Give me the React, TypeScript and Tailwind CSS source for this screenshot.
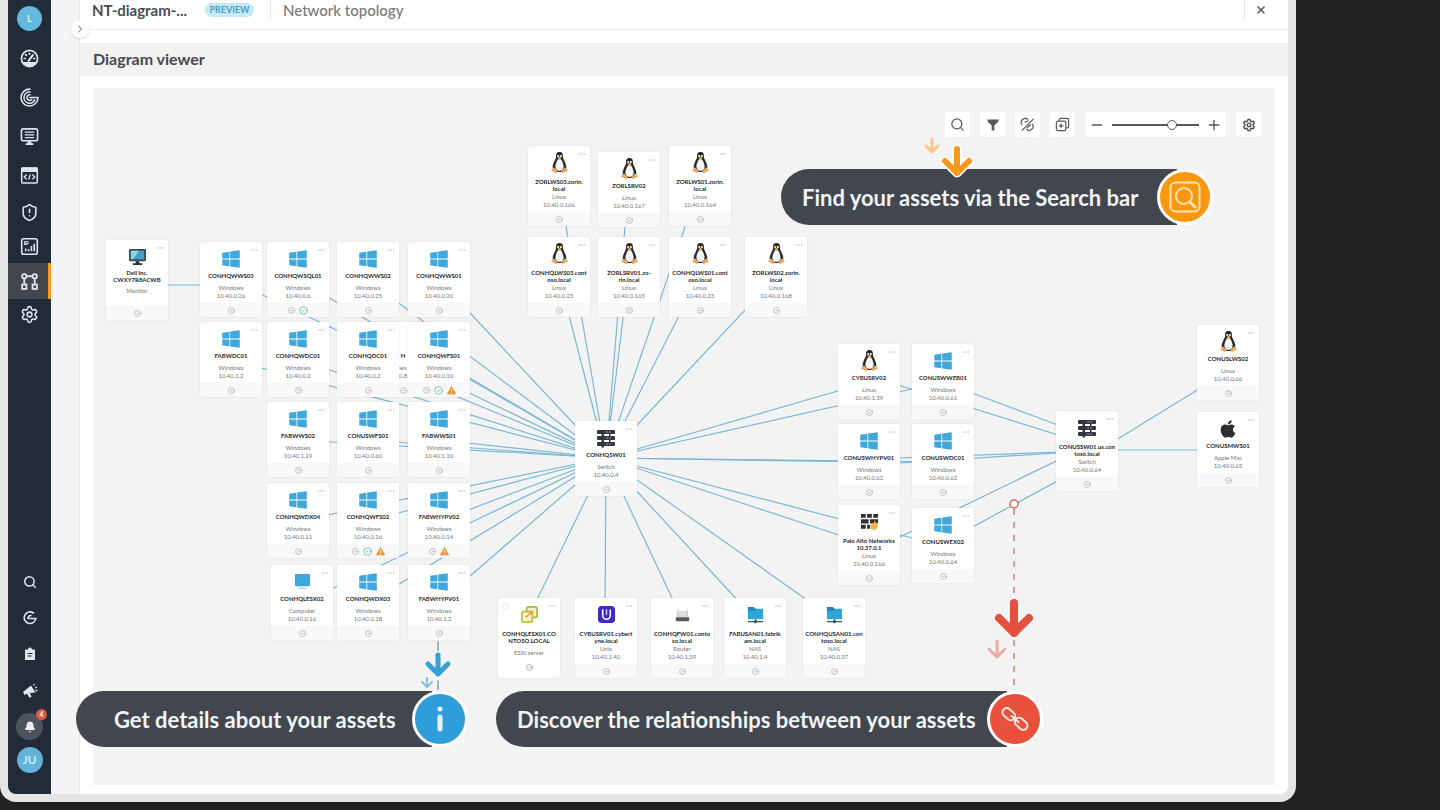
import type { ReactNode } from "react";
import {
  Bell,
  ChevronRight,
  Circle,
  CircleCheck,
  CircleDot,
  Ellipsis,
  Minus,
  Plus,
  Search,
  Settings,
  ShieldAlert,
  X,
} from "lucide-react";
import { FaApple, FaWindows } from "react-icons/fa";

type Kind =
  | "windows"
  | "linux"
  | "apple"
  | "switch"
  | "monitor"
  | "computer"
  | "esx"
  | "unix"
  | "router"
  | "nas"
  | "firewall"
  | "unknown";

type Asset = {
  x: number;
  y: number;
  kind: Kind;
  name: string[];
  type: string;
  ip?: string;
  ok?: boolean;
  warn?: boolean;
};

const ASSETS: Asset[] = [
  { x: 13, y: 152, kind: "monitor", name: ["Dell Inc.", "CWXY7R8ACWB"], type: "Monitor" },

  // partly hidden under its neighbours
  { x: 279, y: 234, kind: "unknown", name: ["H"], type: "ws", ip: "0.8" },

  { x: 107, y: 154, kind: "windows", name: ["CONHQWWS03"], type: "Windows", ip: "10.40.0.26" },
  { x: 174, y: 154, kind: "windows", name: ["CONHQWSQL01"], type: "Windows", ip: "10.40.0.6", ok: true },
  { x: 244, y: 154, kind: "windows", name: ["CONHQWWS02"], type: "Windows", ip: "10.40.0.25" },
  { x: 315, y: 154, kind: "windows", name: ["CONHQWWS01"], type: "Windows", ip: "10.40.0.20" },

  { x: 107, y: 234, kind: "windows", name: ["FABWDC01"], type: "Windows", ip: "10.40.1.2" },
  { x: 174, y: 234, kind: "windows", name: ["CONHQWDC01"], type: "Windows", ip: "10.40.0.2" },
  { x: 244, y: 234, kind: "windows", name: ["CONHQDC01"], type: "Windows", ip: "10.40.0.2" },
  { x: 315, y: 234, kind: "windows", name: ["CONHQWFS01"], type: "Windows", ip: "10.40.0.10", ok: true, warn: true },

  { x: 174, y: 314, kind: "windows", name: ["FABWWS02"], type: "Windows", ip: "10.40.1.19" },
  { x: 244, y: 314, kind: "windows", name: ["CONUSWFS01"], type: "Windows", ip: "10.40.0.60" },
  { x: 315, y: 314, kind: "windows", name: ["FABWWS01"], type: "Windows", ip: "10.40.1.10" },

  { x: 174, y: 395, kind: "windows", name: ["CONHQWDX04"], type: "Windows", ip: "10.40.0.11" },
  { x: 244, y: 395, kind: "windows", name: ["CONHQWFS02"], type: "Windows", ip: "10.40.0.16", ok: true, warn: true },
  { x: 315, y: 395, kind: "windows", name: ["FABWHYPV02"], type: "Windows", ip: "10.40.0.14", warn: true },

  { x: 178, y: 477, kind: "computer", name: ["CONHQLESX02"], type: "Computer", ip: "10.40.0.16" },
  { x: 244, y: 477, kind: "windows", name: ["CONHQWDX03"], type: "Windows", ip: "10.40.0.18" },
  { x: 315, y: 477, kind: "windows", name: ["FABWHYPV01"], type: "Windows", ip: "10.40.1.2" },

  { x: 435, y: 58, kind: "linux", name: ["ZORLWS03.zorin.", "local"], type: "Linux", ip: "10.40.0.166" },
  { x: 505, y: 64, kind: "linux", name: ["ZORLSRV02"], type: "Linux", ip: "10.40.0.167" },
  { x: 576, y: 58, kind: "linux", name: ["ZORLWS01.zorin.", "local"], type: "Linux", ip: "10.40.0.164" },
  { x: 435, y: 149, kind: "linux", name: ["CONHQLWS03.cont", "oso.local"], type: "Linux", ip: "10.40.0.23" },
  { x: 505, y: 149, kind: "linux", name: ["ZORLSRV01.zo-", "rin.local"], type: "Linux", ip: "10.40.0.165" },
  { x: 576, y: 149, kind: "linux", name: ["CONHQLWS01.cont", "oso.local"], type: "Linux", ip: "10.40.0.23" },
  { x: 652, y: 149, kind: "linux", name: ["ZORLWS02.zorin.", "local"], type: "Linux", ip: "10.40.0.168" },

  { x: 482, y: 333, kind: "switch", name: ["CONHQSW01"], type: "Switch", ip: "10.40.0.4" },

  { x: 405, y: 510, kind: "esx", name: ["CONHQLESX01.CO", "NTOSO.LOCAL"], type: "ESXi server" },
  { x: 482, y: 510, kind: "unix", name: ["CYBUSRV01.cybert", "yne.local"], type: "Unix", ip: "10.40.1.40" },
  { x: 558, y: 510, kind: "router", name: ["CONHQFW01.conto", "so.local"], type: "Router", ip: "10.40.1.39" },
  { x: 631, y: 510, kind: "nas", name: ["FABUSAN01.fabrik", "am.local"], type: "NAS", ip: "10.40.1.4" },
  { x: 710, y: 510, kind: "nas", name: ["CONHQUSAN01.con", "toso.local"], type: "NAS", ip: "10.40.0.37" },

  { x: 745, y: 256, kind: "linux", name: ["CYBUSRV02"], type: "Linux", ip: "10.40.1.39" },
  { x: 819, y: 256, kind: "windows", name: ["CONUSWWEB01"], type: "Windows", ip: "10.40.0.61" },
  { x: 745, y: 336, kind: "windows", name: ["CONUSWHYPV01"], type: "Windows", ip: "10.40.0.62" },
  { x: 819, y: 336, kind: "windows", name: ["CONUSWDC01"], type: "Windows", ip: "10.40.0.62" },
  { x: 745, y: 417, kind: "firewall", name: ["Palo Alto Networks", "10.37.0.1"], type: "Linux", ip: "10.40.0.166" },
  { x: 819, y: 420, kind: "windows", name: ["CONUSWEX02"], type: "Windows", ip: "10.40.0.64" },

  { x: 963, y: 323, kind: "switch", name: ["CONUSSW01.us.con", "toso.local"], type: "Switch", ip: "10.40.0.64" },
  { x: 1104, y: 237, kind: "linux", name: ["CONUSLWS02"], type: "Linux", ip: "10.40.0.66" },
  { x: 1104, y: 324, kind: "apple", name: ["CONUSMWS01"], type: "Apple Mac", ip: "10.40.0.65" },
];

const HUB = [513, 370];

const HUB_TARGETS = [
  [138, 192], [205, 192], [275, 192], [346, 192],
  [138, 272], [205, 272], [275, 272], [346, 272],
  [205, 352], [275, 352], [346, 352],
  [205, 433], [275, 433], [346, 433],
  [209, 515], [275, 515], [346, 515],
  [466, 98], [535, 102], [606, 98],
  [466, 189], [535, 189], [606, 189], [683, 189],
  [436, 528], [512, 529], [589, 531], [662, 531], [741, 531],
  [776, 294], [850, 294], [776, 374], [850, 374], [776, 457], [850, 458],
];

const LINKS = [
  [44, 197, 138, 197],
  [850, 294, 994, 348],
  [776, 288, 994, 356],
  [776, 371, 994, 363],
  [776, 377, 994, 363],
  [776, 464, 994, 358],
  [850, 455, 994, 377],
  [994, 370, 1135, 283],
  [994, 362, 1135, 362],
];

function Tux() {
  return (
    <svg viewBox="0 0 20 24" className="h-[23px] w-[19px]">
      <path d="M10 1c-3 0-3.800 2-3.600 5 .1 2.500-3.400 6-3.600 11 0 4 3 5 7.200 5s7.200-1 7.200-5c-.2-5-3.700-8.500-3.600-11C13.800 3 13 1 10 1Z" fill="#26292e" />
      <path d="M10 8c-2 0-3.600 4-4.200 7-.5 4 1.600 6 4.200 6s4.700-2 4.200-6C13.600 12 12 8 10 8Z" fill="#f4f4f2" />
      <circle cx="8.600" cy="5.200" r="1.100" fill="#fff" />
      <circle cx="11.400" cy="5.200" r="1.100" fill="#fff" />
      <path d="M7.600 7.200 10 6l2.400 1.200L10 9Z" fill="#e9a13b" />
      <path d="M1 20.500 4.200 17l4 4.200L6.800 23.400ZM19 20.500 15.800 17l-4 4.200 1.400 2.200Z" fill="#e3a867" />
    </svg>
  );
}

function SwitchIcon() {
  return (
    <svg viewBox="0 0 20 20" className="size-5" fill="#33373c">
      <rect x="1" y="2" width="18" height="4" rx="1" />
      <rect x="1" y="8" width="18" height="4" rx="1" />
      <rect x="1" y="14" width="18" height="4" rx="1" />
      <path d="M5.500 2h2.500v17.500H5.500zM13 2h1.500v15H13z" />
      <path d="M10 4h6M10 10h6M10 16h6" stroke="#9da1a6" strokeWidth="1" strokeDasharray="2 1" />
    </svg>
  );
}

function KindIcon({ kind }: { kind: Kind }) {
  switch (kind) {
    case "windows":
      return <FaWindows className="size-5 text-[#3fa7d9]" />;
    case "linux":
      return <Tux />;
    case "apple":
      return <FaApple className="size-5 text-[#2b2e33]" />;
    case "switch":
      return <SwitchIcon />;
    case "monitor":
      return (
        <svg viewBox="0 0 20 20" className="size-[19px]">
          <rect x="1" y="2" width="18" height="13" rx="1.500" fill="#3a4a55" />
          <rect x="3" y="4" width="14" height="9" fill="#41a3c4" />
          <path d="M3 4h9L5 13H3Z" fill="#8fd0e2" />
          <path d="M8 15h4v2h3v2H5v-2h3Z" fill="#2b3137" />
        </svg>
      );
    case "computer":
      return (
        <svg viewBox="0 0 20 20" className="size-[19px]">
          <rect x="2" y="2" width="16" height="13" rx="1.500" fill="#3fa7d9" />
          <path d="M6 17h8" stroke="#a9d6ea" strokeWidth="1.500" />
        </svg>
      );
    case "esx":
      return (
        <svg viewBox="0 0 20 20" className="size-[19px]" fill="none" strokeWidth="1.800">
          <rect x="7" y="2" width="11" height="11" rx="2" stroke="#a3b93c" fill="#eef0c8" />
          <rect x="2" y="7" width="11" height="11" rx="2" stroke="#b9c23c" fill="#f5f2cf" />
          <path d="m6 13 7-6m0 0h-4m4 0v3" stroke="#e8a13a" strokeWidth="1.500" />
        </svg>
      );
    case "unix":
      return (
        <svg viewBox="0 0 20 20" className="size-[19px]" fill="none">
          <rect x="1" y="1" width="18" height="18" rx="4" fill="#3d2bc4" />
          <path d="M6 4.500v6.500a4 4 0 0 0 8 0V4.500" stroke="#fff" strokeWidth="1.600" />
          <path d="M10 4.500v6" stroke="#c9c3f5" strokeWidth="1.600" />
        </svg>
      );
    case "router":
      return (
        <svg viewBox="0 0 20 20" className="size-[19px]">
          <path d="M3 13 6 6h8l3 7Z" fill="#dedede" />
          <rect x="3" y="13" width="14" height="4" rx="1" fill="#55595d" />
          <path d="M5 12V5M15 12V5" stroke="#bcbcbc" />
        </svg>
      );
    case "nas":
      return (
        <svg viewBox="0 0 20 20" className="size-[19px]">
          <path d="M2 2h6l2 2h8v11H2Z" fill="#2fa6d3" />
          <path d="M2 2h6l2 2v2H2Z" fill="#2288b0" />
          <path d="M2 17.500h16M10 15v3" stroke="#3b5662" strokeWidth="1.400" />
          <circle cx="10" cy="17.500" r="1.800" fill="#3b5662" />
        </svg>
      );
    case "firewall":
      return (
        <svg viewBox="0 0 20 20" className="size-[19px]" fill="#2c2f35">
          <path d="M1 2h5v4H1ZM7.500 2h5v4h-5ZM14 2h5v4h-5ZM1 7.500h8V12H1ZM10.500 7.500H19V12h-8.500ZM1 13.500h5v4H1ZM7.500 13.500h3v4h-3Z" />
          <path d="M15 8c1 2.500 3.500 4 3.500 7a3.800 3.800 0 0 1-7.600 0c0-2 1.400-2.500 1.600-4 1 .5 1.500 1 1.500 2 1-1.200 1.300-3 1-5Z" fill="#eeb445" />
        </svg>
      );
    default:
      return null;
  }
}

function WarnIcon() {
  return (
    <svg viewBox="0 0 10 10" className="size-[9px]">
      <path d="M5 .5 9.800 9H.2Z" fill="#f0962e" stroke="#f0962e" strokeLinejoin="round" strokeWidth=".6" />
      <path d="M5 3.500v2.800M5 7.200v1" stroke="#fff" strokeWidth="1" />
    </svg>
  );
}

function AssetCard({ asset }: { asset: Asset }) {
  const isEsx = asset.kind === "esx";
  let nameBox = "h-[13px] justify-start pt-px";
  if (asset.name.length > 1) {
    nameBox = asset.kind === "monitor" ? "h-[18px] justify-start" : "h-[18px] justify-end pb-px";
  }

  return (
    <article
      className="absolute w-[62px] rounded-xs bg-white text-center shadow-[0_0_3px_rgba(0,0,0,0.07)]"
      style={{ left: asset.x, top: asset.y }}
    >
      {isEsx && <Circle className="absolute top-[5px] left-1 size-[7px] text-[#d5d5d5]" />}
      <button aria-label="More" className="absolute top-1 right-1 text-[#c3c3c3]">
        <Ellipsis className="size-2" />
      </button>
      <div className="flex h-[29px] items-center justify-center pt-1">
        <KindIcon kind={asset.kind} />
      </div>
      <h3 className={`flex flex-col items-center text-[6px] leading-[7px] font-bold whitespace-nowrap text-[#26282b] ${nameBox}`}>
        {asset.name.map((line) => (
          <span key={line}>{line}</span>
        ))}
      </h3>
      <div className="h-[19px] text-[6px] leading-[8px] text-[#74777b]">
        <p className={isEsx ? "pt-1" : ""}>{asset.type}</p>
        {asset.ip && <p>{asset.ip}</p>}
      </div>
      {isEsx ? (
        <div className="flex h-[14px] justify-center">
          <CircleDot className="size-[7px] text-[#5d87a0]" />
        </div>
      ) : (
        <div className="flex h-[14px] items-center justify-center gap-1 rounded-b-xs bg-[#f8f8f8]">
          <CircleDot className="size-[7px] text-[#96999c]" />
          {asset.ok && <CircleCheck className="size-[9px] text-[#4fc08d]" />}
          {asset.warn && <WarnIcon />}
        </div>
      )}
    </article>
  );
}

function Callout({
  text,
  className,
  badge,
  children,
}: {
  text: string;
  className: string;
  badge: string;
  children: ReactNode;
}) {
  return (
    <div className={`absolute flex items-center text-[22px] leading-7 font-bold whitespace-nowrap text-[#f1f4f8] ${className}`}>
      <span className="-mr-5 flex h-14 flex-1 items-center rounded-l-full bg-[#42464f] pt-px">{text}</span>
      <span className={`flex size-14 shrink-0 items-center justify-center rounded-full border-3 border-white ${badge}`}>
        {children}
      </span>
    </div>
  );
}

function NavButton({ label, className, children }: { label: string; className: string; children: ReactNode }) {
  return (
    <button aria-label={label} className={`flex w-full items-center justify-center text-[#dfe5ea] ${className}`}>
      {children}
    </button>
  );
}

function Sidebar() {
  return (
    <nav className="flex w-[43px] shrink-0 flex-col items-center rounded-bl-lg bg-[#222c38] pt-[6px] pb-[21px]">
      <button className="mb-2 size-[25px] shrink-0 rounded-full bg-[#62b9df] text-[10px] font-bold text-[#d9f2fd]">L</button>
      <NavButton label="Dashboard" className="h-[39px]">
        <svg viewBox="0 0 20 20" className="size-[19px]" fill="none" stroke="currentColor" strokeWidth="1.800">
          <circle cx="10" cy="10" r="8.500" />
          <path d="M3.500 14.500h13A8.500 8.500 0 0 1 3.500 14.500Z" fill="currentColor" />
          <path d="m9 12.500 4.500-6" strokeWidth="2.200" strokeLinecap="round" />
          <path d="M4.500 10h1M6 6l.8.800M10 4.500v1M14.500 10h1" strokeLinecap="round" />
        </svg>
      </NavButton>
      <NavButton label="Scanning" className="h-[39px]">
        <svg viewBox="0 0 20 20" className="size-[19px]" fill="none" stroke="currentColor" strokeWidth="1.600" strokeLinecap="round">
          <path d="M10.500 1.200A8.900 8.900 0 1 0 18.900 10H10" />
          <path d="M10.500 4.200A5.900 5.900 0 1 0 15.500 12.500" />
          <path d="M10.500 7.200A2.900 2.900 0 1 0 12.300 12" />
        </svg>
      </NavButton>
      <NavButton label="Inventory" className="h-[39px]">
        <svg viewBox="0 0 20 20" className="size-[19px]" fill="none" stroke="currentColor" strokeWidth="1.700">
          <rect x="1.500" y="2" width="17" height="12.500" rx="2" />
          <path d="M5 5.500h10M5 8.300h10M5 11.100h10" strokeWidth="1.300" />
          <path d="M8 15h4v2h2v2H6v-2h2Z" fill="currentColor" stroke="none" />
        </svg>
      </NavButton>
      <NavButton label="Reports" className="h-[39px]">
        <svg viewBox="0 0 20 20" className="size-[19px]" fill="none" stroke="currentColor" strokeWidth="1.600">
          <rect x="1.800" y="2" width="16.400" height="16" rx="1.500" />
          <path d="M2 2.500h16v3H2Z" fill="currentColor" />
          <path d="m7 9-2.500 2.500L7 14M13 9l2.500 2.500L13 14M10.800 8.800l-1.600 5.400" strokeWidth="1.400" />
        </svg>
      </NavButton>
      <NavButton label="Security" className="h-[34px]">
        <ShieldAlert className="size-[19px]" />
      </NavButton>
      <NavButton label="Insights" className="h-[34px]">
        <svg viewBox="0 0 20 20" className="size-[19px]" fill="none" stroke="currentColor" strokeWidth="1.700">
          <rect x="1.800" y="1.800" width="16.400" height="16.400" rx="2" />
          <path d="M6 15v-3M9 15v-2M12 15V9.500M15 15V7" />
          <path d="M5 8.500V5h4M5.500 8 9 6.500" strokeWidth="1.300" />
        </svg>
      </NavButton>
      <NavButton label="Network topology" className="h-9 border-r-3 border-[#f29a1f] bg-[#41464f] pl-[3px]">
        <svg viewBox="0 0 20 20" className="size-[19px]" fill="none" stroke="currentColor" strokeWidth="1.900">
          <circle cx="4.500" cy="4.500" r="2.300" />
          <circle cx="15.500" cy="4.500" r="2.300" />
          <rect x="2.200" y="13.200" width="4.600" height="4.600" />
          <rect x="13.200" y="13.200" width="4.600" height="4.600" />
          <path d="M4.500 7v6M15.500 7v6M7 4.500h6" />
        </svg>
      </NavButton>
      <NavButton label="Settings" className="h-[30px]">
        <Settings className="size-[19px]" />
      </NavButton>

      <div className="mt-auto flex w-full flex-col items-center">
        <NavButton label="Search" className="h-9">
          <Search className="size-[14px]" strokeWidth={2.600} />
        </NavButton>
        <NavButton label="Scan" className="h-9">
          <svg viewBox="0 0 14 14" className="size-[14px]" fill="none" stroke="currentColor" strokeWidth="1.600" strokeLinecap="round">
            <path d="M10.500 2A5.800 5.800 0 1 0 12.800 7.500H5M5 7.500c0-2 1-3 3-3" />
          </svg>
        </NavButton>
        <NavButton label="Tasks" className="h-9">
          <svg viewBox="0 0 14 14" className="size-[14px]">
            <path d="M2 2.500h3a2 2 0 0 1 4 0h3V13H2Z" fill="currentColor" />
            <path d="M4.500 6.500h5M4.500 9h4" stroke="#222c38" />
          </svg>
        </NavButton>
        <NavButton label="News" className="mb-[3px] h-[38px]">
          <svg viewBox="0 0 16 16" className="size-4" fill="currentColor">
            <path d="M9 2.500 13.500 9.500 8 10l1.500 4-2 .8L5 10.800 2.500 12 1 9Z" />
            <path d="M11.500 2.500 12.500 1M13 5l2-1M13.500 7.500h2" stroke="currentColor" strokeWidth="1.300" />
          </svg>
        </NavButton>
        <button aria-label="Notifications" className="relative mb-[7px] flex size-[27px] items-center justify-center rounded-full bg-[#4d545e] text-[#eef1f4]">
          <Bell className="size-3" fill="currentColor" />
          <span className="absolute -top-1 -right-1 flex size-[11px] items-center justify-center rounded-full bg-[#e4573f] text-[7px] font-bold">
            4
          </span>
        </button>
        <button className="size-[26px] rounded-full bg-[#62b2da] text-[12px] font-bold text-[#c9ecfb]">JU</button>
      </div>
    </nav>
  );
}

function ToolButton({ label, children }: { label: string; children: ReactNode }) {
  return (
    <button aria-label={label} className="flex size-[25px] items-center justify-center rounded-xs bg-white text-[#55585c]">
      {children}
    </button>
  );
}

function Toolbar() {
  return (
    <div className="relative flex justify-end gap-[10px] pt-6 pr-[14px]">
      <ToolButton label="Search">
        <Search className="size-[15px]" />
      </ToolButton>
      <ToolButton label="Filter">
        <svg viewBox="0 0 12 12" className="size-3" fill="currentColor">
          <path d="M.5.500h11v2L7.300 6.500V11.500H4.700V6.500L.5 2.500Z" />
        </svg>
      </ToolButton>
      <ToolButton label="Hide links">
        <svg viewBox="0 0 16 16" className="size-[15px]" fill="none" stroke="currentColor" strokeWidth="1.300">
          <path d="M2.500 8.500A3.500 3.500 0 0 1 2.500 3l1-.8a3.300 3.300 0 0 1 5 .8M7 12.500a3 3 0 0 0 5 1l1-1a3.500 3.500 0 0 0 0-5M14.500 2 2 14.500M5 5.500l4-1.500M7.500 11.500l4-3.500" />
        </svg>
      </ToolButton>
      <ToolButton label="Expand all">
        <svg viewBox="0 0 16 16" className="size-[15px]" fill="none" stroke="currentColor" strokeWidth="1.300">
          <rect x="1.500" y="4.500" width="10" height="10" rx="1.500" />
          <path d="M4.500 4V3A1.500 1.500 0 0 1 6 1.500h7A1.500 1.500 0 0 1 14.500 3v7a1.500 1.500 0 0 1-1.500 1.500h-1M6.500 7v5M4 9.500h5" />
        </svg>
      </ToolButton>
      <div className="flex h-[25px] w-[141px] items-center justify-between rounded-xs bg-white px-1 text-[#55585c]">
        <button aria-label="Zoom out">
          <Minus className="size-4" />
        </button>
        <input
          type="range"
          aria-label="Zoom"
          defaultValue={71}
          className="h-[2px] w-[87px] appearance-none bg-[#55585c] [&::-webkit-slider-thumb]:size-[10px] [&::-webkit-slider-thumb]:appearance-none [&::-webkit-slider-thumb]:rounded-full [&::-webkit-slider-thumb]:border [&::-webkit-slider-thumb]:border-[#55585c] [&::-webkit-slider-thumb]:bg-white"
        />
        <button aria-label="Zoom in">
          <Plus className="size-4" />
        </button>
      </div>
      <ToolButton label="Settings">
        <Settings className="size-[14px]" strokeWidth={2.600} />
      </ToolButton>
    </div>
  );
}

function Pointers() {
  return (
    <svg
      className="pointer-events-none absolute inset-0 size-full overflow-visible"
      fill="none"
      strokeLinecap="round"
      strokeLinejoin="round"
    >
      {/* search */}
      <path d="M864 61v24M852 73l12 12 12-12" stroke="#fff" strokeWidth="9" />
      <path d="M864 61v24M852 73l12 12 12-12" stroke="#f7981d" strokeWidth="6" />
      <path d="M839 51v12M833 58l6 6 6-6" stroke="#f9c78a" strokeWidth="3" />

      {/* details */}
      <path d="M345 554v8M345 593v8" stroke="#9fb3c4" strokeWidth="2" />
      <path d="M345 567v18M335 576l10 10 10-10" stroke="#379fd8" strokeWidth="5" />
      <path d="M334 590v8M329 594l5 5 5-5" stroke="#86bfe0" strokeWidth="2" />

      {/* relationships */}
      <path d="M921 421v90M921 552v52" stroke="#d58077" strokeWidth="1.500" strokeDasharray="6 7" strokeLinecap="butt" />
      <circle cx="921" cy="416" r="4" fill="#f7f7f7" stroke="#e26557" strokeWidth="1.500" />
      <path d="M921 515v30M906 530l15 15 15-15" stroke="#e2503f" strokeWidth="8" />
      <path d="M904 553v14M896 561l8 8 8-8" stroke="#efaba3" strokeWidth="3" />
    </svg>
  );
}

export default function App() {
  return (
    <div className="flex min-h-screen bg-[#212121] pb-2 font-[Lato,'Open_Sans',sans-serif]">
      <div className="flex w-[90%] min-w-[1290px] rounded-b-2xl border-x-8 border-b-8 border-[#e5e5e6] bg-[#f3f4f5]">
        <Sidebar />

        <main className="relative ml-7 flex flex-1 flex-col rounded-br-lg border-l border-[#e6e7e8] bg-white">
          <button
            aria-label="Expand menu"
            className="absolute top-5 -left-[9px] z-10 flex size-[18px] items-center justify-center rounded-full bg-white text-[#5b5e62] shadow-sm"
          >
            <ChevronRight className="size-3" />
          </button>

          <header className="flex h-[30px] items-center border-b border-[#e9e9e9] px-3 pb-[10px] text-[15px] leading-5">
            <h1 className="w-[98px] font-bold text-[#4a4d51]">NT-diagram-...</h1>
            <span className="ml-[15px] flex h-[14px] w-[49px] items-center justify-center rounded-full bg-[#c6e9f7] text-[9px] font-bold text-[#4f9dc0]">
              PREVIEW
            </span>
            <span className="ml-4 h-5 border-l border-[#e6e6e6]" />
            <h2 className="ml-3 font-medium text-[#77797c]">Network topology</h2>
            <button
              aria-label="Close"
              className="ml-auto flex h-5 w-8 items-center justify-center border-l border-[#e6e6e6] text-[#606060]"
            >
              <X className="size-3" strokeWidth={3.500} />
            </button>
          </header>

          <div className="mt-[13px] flex h-[33px] items-center bg-[#f2f2f2] px-[13px] pb-[2px]">
            <h2 className="text-[16px] leading-5 font-bold text-[#47494c]">Diagram viewer</h2>
          </div>

          <section className="relative mx-[13px] mt-3 mb-[9px] min-h-[697px] flex-1 bg-[#f3f3f3]">
            <svg className="absolute inset-0 size-full" stroke="#7ab7d8" strokeWidth="1.200">
              {HUB_TARGETS.map(([x, y]) => (
                <line key={`${x}-${y}`} x1={HUB[0]} y1={HUB[1]} x2={x} y2={y} />
              ))}
              {LINKS.map(([x1, y1, x2, y2]) => (
                <line key={`${x1}-${y1}-${y2}`} x1={x1} y1={y1} x2={x2} y2={y2} />
              ))}
            </svg>

            <Toolbar />

            {ASSETS.map((asset) => (
              <AssetCard key={`${asset.x}-${asset.y}`} asset={asset} />
            ))}

            <Callout text="Find your assets via the Search bar" className="top-[81px] left-[688px] w-[432px] [&>span:first-child]:pl-[21px]" badge="bg-[#f9980f]">
              <svg viewBox="0 0 32 32" className="size-8" fill="none" stroke="#ffe3b5" strokeWidth="2" strokeLinecap="round">
                <rect x="1.500" y="1.500" width="29" height="29" rx="5" />
                <circle cx="15" cy="15" r="8" />
                <path d="m21 21 5 5" strokeWidth="3" />
              </svg>
            </Callout>
            <Callout text="Get details about your assets" className="top-[603px] -left-[17px] w-[392px] [&>span:first-child]:pl-[38px]" badge="bg-[#309ddb]">
              <svg viewBox="0 0 10 26" className="h-[26px] w-[10px]" fill="none" stroke="#e6f5fd" strokeWidth="5" strokeLinecap="round">
                <path d="M5 3v.010M5 11v12" />
              </svg>
            </Callout>
            <Callout
              text="Discover the relationships between your assets"
              className="top-[603px] left-[403px] w-[547px] [&>span:first-child]:pl-[21px]"
              badge="bg-[#ea513c]"
            >
              <svg viewBox="0 0 28 28" className="size-7" fill="none" stroke="#fde4df" strokeWidth="2" strokeLinecap="round">
                <rect x="1" y="5" width="14" height="8.500" rx="4.200" transform="rotate(42 8 9)" />
                <rect x="13" y="14.500" width="14" height="8.500" rx="4.200" transform="rotate(42 20 19)" />
                <path d="m10.500 11 7 6" />
              </svg>
            </Callout>

            <Pointers />
          </section>
        </main>
      </div>
    </div>
  );
}
